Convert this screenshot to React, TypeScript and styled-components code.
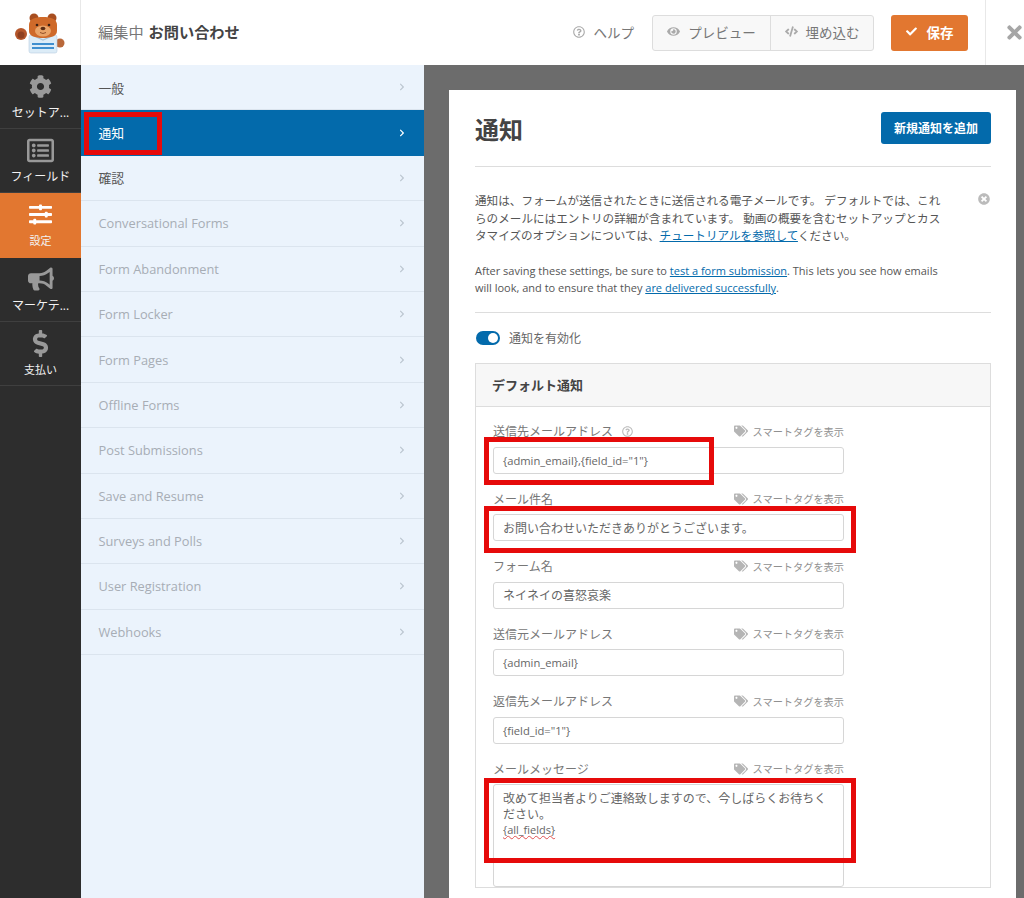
import React from 'react';
import styled, { createGlobalStyle } from 'styled-components';
import {
  FaBullhorn,
  FaCheck,
  FaChevronRight,
  FaCode,
  FaCog,
  FaDollarSign,
  FaEye,
  FaRegListAlt,
  FaRegQuestionCircle,
  FaSlidersH,
  FaTags,
  FaTimes,
  FaTimesCircle,
} from 'react-icons/fa';

const FONT = '"Open Sans", "Noto Sans CJK JP", sans-serif';

const GlobalStyle = createGlobalStyle`
  html, body {
    margin: 0;
    padding: 0;
    background: #6f6f6f;
    font-family: ${FONT};
    color: #444;
  }
  * {
    box-sizing: border-box;
  }
`;

const Page = styled.div`
  position: relative;
  display: flex;
  flex-direction: column;
  width: 1024px;
  height: 898px;
  overflow: hidden;
`;

// Header
const Header = styled.header`
  display: flex;
  align-items: stretch;
  height: 65px;
  flex-shrink: 0;
  background: #fff;
`;

const LogoCell = styled.div`
  display: flex;
  align-items: center;
  justify-content: center;
  width: 81px;
  border-right: 1px solid #e8e8e8;
`;

const Title = styled.div`
  flex: 1;
  display: flex;
  align-items: center;
  gap: 5px;
  padding: 0 0 3px 17px;
  font-size: 15.2px;
  color: #777;

  strong {
    color: #444;
    font-weight: 700;
  }
`;

const HelpLink = styled.div`
  display: flex;
  align-items: center;
  gap: 9px;
  margin-right: 18px;
  padding-bottom: 2px;
  font-size: 13.5px;
  color: #777;

  svg {
    font-size: 12px;
    color: #aaa;
  }
`;

const ButtonGroup = styled.div`
  display: flex;
  align-self: center;
  height: 36px;
  margin: 0 17px 0 0;
  background: #f8f8f8;
  border: 1px solid #ddd;
  border-radius: 3px;
`;

const GroupButton = styled.div<{ $width: number }>`
  display: flex;
  align-items: center;
  justify-content: center;
  gap: 8px;
  width: ${(p) => p.$width}px;
  padding-bottom: 2px;
  font-size: 13.5px;
  color: #777;

  & + & {
    border-left: 1px solid #ddd;
  }

  svg {
    font-size: 13px;
    color: #aaa;
  }
`;

const SaveButton = styled.div`
  display: flex;
  align-items: center;
  justify-content: center;
  align-self: center;
  gap: 10px;
  width: 77px;
  height: 36px;
  padding-bottom: 2px;
  background: #e27730;
  border-radius: 3px;
  color: #fff;
  font-size: 13.5px;
  font-weight: 700;

  svg {
    font-size: 11px;
  }
`;

const CloseCell = styled.div`
  display: flex;
  align-items: center;
  width: 39px;
  margin-left: 17px;
  padding-left: 19px;
  border-left: 1px solid #e8e8e8;
  font-size: 21px;
  color: #a6a6a6;
`;

// Main area
const Body = styled.div`
  flex: 1;
  display: flex;
  min-height: 0;
`;

const Sidebar = styled.nav`
  width: 81px;
  flex-shrink: 0;
  background: #2d2d2d;
`;

const SideItem = styled.div<{ $active?: boolean; $small?: boolean; $icon: number }>`
  display: flex;
  flex-direction: column;
  align-items: center;
  height: 64.2px;
  padding-top: 8px;
  background: ${(p) => (p.$active ? '#e27730' : 'transparent')};
  border-bottom: 1px solid ${(p) => (p.$active ? '#e27730' : '#3f3f3f')};
  color: #f2f2f2;
  font-size: ${(p) => (p.$small ? 11 : 12)}px;
  line-height: 17px;
  white-space: nowrap;

  svg {
    height: ${(p) => p.$icon}px;
    width: ${(p) => p.$icon}px;
    margin: ${(p) => (27 - p.$icon) / 2}px 0 ${(p) => 4 + (27 - p.$icon) / 2}px;
    color: ${(p) => (p.$active ? '#fff' : '#999')};
  }
`;

const SubPanel = styled.nav`
  width: 343px;
  flex-shrink: 0;
  background: #ebf3fc;
`;

const SubItem = styled.div<{ $active?: boolean; $disabled?: boolean }>`
  display: flex;
  align-items: center;
  justify-content: space-between;
  height: 45.4px;
  padding: 0 18px 0 17.5px;
  font-size: 12.8px;
  background: ${(p) => (p.$active ? '#036aab' : 'transparent')};
  border-bottom: 1px solid ${(p) => (p.$active ? '#036aab' : '#dbe4ee')};
  color: ${(p) => (p.$active ? '#fff' : p.$disabled ? '#a7adb5' : '#555')};

  svg {
    font-size: 8px;
    color: ${(p) => (p.$active ? '#fff' : '#bcc6d0')};
  }
`;

const Content = styled.main`
  flex: 1;
  min-width: 0;
  padding: 25px 8px 0 25px;
  background: #6c6c6c;
`;

const Panel = styled.section`
  height: 100%;
  padding: 22px 25px 0 26px;
  background: #fff;
`;

const PanelHeader = styled.div`
  display: flex;
  align-items: center;
  justify-content: space-between;
  height: 55px;
  padding-bottom: 22px;
  border-bottom: 1px solid #ddd;
`;

const PanelTitle = styled.h2`
  margin: 0;
  font-size: 24px;
  font-weight: 700;
  color: #444;
`;

const AddButton = styled.div`
  display: flex;
  align-items: center;
  justify-content: center;
  width: 110px;
  height: 32px;
  background: #036aab;
  border-radius: 3px;
  color: #fff;
  font-size: 12px;
  font-weight: 700;
`;

const Notice = styled.div`
  position: relative;
  padding: 25px 0 15px;
  border-bottom: 1px solid #ddd;
  line-height: 17.5px;
  color: #555;

  a {
    color: #036aab;
    text-decoration: underline;
  }
`;

const NoticeText = styled.p`
  width: 470px;
  margin: 0 0 17px;
  font-size: 11.6px;
`;

const NoticeNote = styled.p`
  width: 470px;
  margin: 0;
  font-size: 11px;
`;

const NoticeClose = styled.span`
  position: absolute;
  top: 26px;
  right: 1px;
  font-size: 12px;
  line-height: 14px;
  color: #bbb;
`;

const ToggleRow = styled.div`
  display: flex;
  align-items: center;
  gap: 9px;
  height: 50px;
  font-size: 12px;
  color: #666;
`;

const Toggle = styled.span`
  position: relative;
  width: 24px;
  height: 14px;
  margin-left: 1px;
  border-radius: 7px;
  background: #036aab;

  &::after {
    content: '';
    position: absolute;
    top: 2px;
    right: 2px;
    width: 10px;
    height: 10px;
    border-radius: 50%;
    background: #fff;
  }
`;

const Card = styled.div`
  border: 1px solid #ddd;
  background: #fff;
`;

const CardHeader = styled.div`
  display: flex;
  align-items: center;
  height: 43px;
  padding-left: 16px;
  background: #f7f7f7;
  border-bottom: 1px solid #ddd;
  font-size: 13px;
  font-weight: 700;
  color: #444;
`;

const CardBody = styled.div`
  display: flex;
  flex-direction: column;
  gap: 16.6px;
  width: 368px;
  padding: 16px 0 0 17px;
`;

const Field = styled.div`
  display: flex;
  flex-direction: column;
  gap: 7px;
`;

const LabelRow = styled.div`
  display: flex;
  align-items: center;
  justify-content: space-between;
  height: 17px;
`;

const Label = styled.label`
  display: flex;
  align-items: center;
  gap: 9px;
  font-size: 12px;
  color: #777;

  svg {
    font-size: 11px;
    color: #bbb;
  }
`;

const SmartTag = styled.span`
  display: flex;
  align-items: center;
  gap: 5px;
  font-size: 10.2px;
  color: #909090;

  svg {
    font-size: 14px;
    color: #b5b5b5;
  }
`;

const InputBox = styled.div<{ $small?: boolean }>`
  display: flex;
  align-items: center;
  height: 27px;
  padding: 0 9px;
  background: #fff;
  border: 1px solid #d6d6d6;
  border-radius: 3px;
  font-size: ${(p) => (p.$small ? 11.2 : 12)}px;
  color: #666;
`;

const TextBox = styled.div`
  height: 103px;
  padding: 6px 9px;
  background: #fff;
  border: 1px solid #d6d6d6;
  border-radius: 3px;
  font-size: 12px;
  line-height: 15.5px;
  color: #666;
`;

const Misspelled = styled.span`
  font-size: 11px;
  text-decoration: underline wavy #e05050 1px;
`;

// Red annotation frames drawn over the screenshot
const Highlight = styled.div<{ $x: number; $y: number; $w: number; $h: number }>`
  position: absolute;
  left: ${(p) => p.$x}px;
  top: ${(p) => p.$y}px;
  width: ${(p) => p.$w}px;
  height: ${(p) => p.$h}px;
  border: 5px solid #e60a0a;
  pointer-events: none;
`;

const Bear = () => (
  <svg width="52" height="44" viewBox="0 0 52 44" aria-hidden="true">
    <circle cx="7" cy="23" r="6" fill="#b5562a" />
    <circle cx="7" cy="24" r="3.5" fill="#8f4020" />
    <circle cx="46" cy="32" r="4.5" fill="#b9683a" />
    <rect x="15" y="24" width="28" height="18" rx="2" fill="#dcecf7" stroke="#b9cfe0" strokeWidth="0.6" />
    <rect x="18" y="32" width="22" height="2" fill="#3f8fcf" />
    <rect x="18" y="36" width="22" height="2" fill="#3f8fcf" />
    <path d="M20 25l9 4 9-4" fill="none" stroke="#a9c4d8" strokeWidth="1.2" />
    <circle cx="20" cy="7" r="4.5" fill="#a84e20" />
    <circle cx="38" cy="7" r="4.5" fill="#a84e20" />
    <path d="M15 14c0-6 6-8 14-8s14 2 14 8v6c0 5-6 7-14 7s-14-2-14-7z" fill="#cf6a2a" />
    <ellipse cx="29" cy="20" rx="8" ry="5.5" fill="#eaa468" />
    <circle cx="23" cy="14" r="1.3" fill="#3a2014" />
    <circle cx="35" cy="14" r="1.3" fill="#3a2014" />
    <ellipse cx="29" cy="17.5" rx="2.4" ry="1.7" fill="#5a2c14" />
    <path d="M26 21.5q3 2 6 0" fill="none" stroke="#7a3a18" strokeWidth="0.8" />
  </svg>
);

const sideItems = [
  { icon: <FaCog />, size: 23, label: 'セットア...' },
  { icon: <FaRegListAlt />, size: 27, label: 'フィールド' },
  { icon: <FaSlidersH />, size: 23, label: '設定', active: true, small: true },
  { icon: <FaBullhorn />, size: 26, label: 'マーケテ...' },
  { icon: <FaDollarSign />, size: 27, label: '支払い', small: true },
];

const subItems = [
  { label: '一般' },
  { label: '通知', active: true },
  { label: '確認' },
  { label: 'Conversational Forms', disabled: true },
  { label: 'Form Abandonment', disabled: true },
  { label: 'Form Locker', disabled: true },
  { label: 'Form Pages', disabled: true },
  { label: 'Offline Forms', disabled: true },
  { label: 'Post Submissions', disabled: true },
  { label: 'Save and Resume', disabled: true },
  { label: 'Surveys and Polls', disabled: true },
  { label: 'User Registration', disabled: true },
  { label: 'Webhooks', disabled: true },
];

const fields = [
  { label: '送信先メールアドレス', value: '{admin_email},{field_id="1"}', small: true, help: true },
  { label: 'メール件名', value: 'お問い合わせいただきありがとうございます。' },
  { label: 'フォーム名', value: 'ネイネイの喜怒哀楽' },
  { label: '送信元メールアドレス', value: '{admin_email}', small: true },
  { label: '返信先メールアドレス', value: '{field_id="1"}', small: true },
];

const FieldLabel: React.FC<{ label: string; help?: boolean }> = ({ label, help }) => (
  <LabelRow>
    <Label>
      {label}
      {help && <FaRegQuestionCircle />}
    </Label>
    <SmartTag>
      <FaTags />
      スマートタグを表示
    </SmartTag>
  </LabelRow>
);

const App: React.FC = () => (
  <Page>
    <GlobalStyle />
    <Header>
      <LogoCell>
        <Bear />
      </LogoCell>
      <Title>
        編集中 <strong>お問い合わせ</strong>
      </Title>
      <HelpLink>
        <FaRegQuestionCircle />
        ヘルプ
      </HelpLink>
      <ButtonGroup>
        <GroupButton $width={117}>
          <FaEye />
          プレビュー
        </GroupButton>
        <GroupButton $width={103}>
          <FaCode />
          埋め込む
        </GroupButton>
      </ButtonGroup>
      <SaveButton>
        <FaCheck />
        保存
      </SaveButton>
      <CloseCell>
        <FaTimes />
      </CloseCell>
    </Header>
    <Body>
      <Sidebar>
        {sideItems.map((item) => (
          <SideItem key={item.label} $active={item.active} $small={item.small} $icon={item.size}>
            {item.icon}
            {item.label}
          </SideItem>
        ))}
      </Sidebar>
      <SubPanel>
        {subItems.map((item) => (
          <SubItem key={item.label} $active={item.active} $disabled={item.disabled}>
            {item.label}
            <FaChevronRight />
          </SubItem>
        ))}
      </SubPanel>
      <Content>
        <Panel>
          <PanelHeader>
            <PanelTitle>通知</PanelTitle>
            <AddButton>新規通知を追加</AddButton>
          </PanelHeader>
          <Notice>
            <NoticeClose>
              <FaTimesCircle />
            </NoticeClose>
            <NoticeText>
              通知は、フォームが送信されたときに送信される電子メールです。 デフォルトでは、これらのメールにはエントリの詳細が含まれています。
              動画の概要を含むセットアップとカスタマイズのオプションについては、<a href="#tutorial">チュートリアルを参照して</a>ください。
            </NoticeText>
            <NoticeNote>
              After saving these settings, be sure to <a href="#test">test a form submission</a>. This lets you see how
              emails will look, and to ensure that they <a href="#delivery">are delivered successfully</a>.
            </NoticeNote>
          </Notice>
          <ToggleRow>
            <Toggle />
            通知を有効化
          </ToggleRow>
          <Card>
            <CardHeader>デフォルト通知</CardHeader>
            <CardBody>
              {fields.map((field) => (
                <Field key={field.label}>
                  <FieldLabel label={field.label} help={field.help} />
                  <InputBox $small={field.small}>{field.value}</InputBox>
                </Field>
              ))}
              <Field>
                <FieldLabel label="メールメッセージ" />
                <TextBox>
                  改めて担当者よりご連絡致しますので、今しばらくお待ちください。
                  <br />
                  <Misspelled>{'{all_fields}'}</Misspelled>
                </TextBox>
              </Field>
            </CardBody>
          </Card>
        </Panel>
      </Content>
    </Body>
    <Highlight $x={84} $y={112} $w={78} $h={43} />
    <Highlight $x={484} $y={437} $w={230} $h={48} />
    <Highlight $x={484} $y={506} $w={372} $h={47} />
    <Highlight $x={484} $y={778} $w={372} $h={85} />
  </Page>
);

export default App;
